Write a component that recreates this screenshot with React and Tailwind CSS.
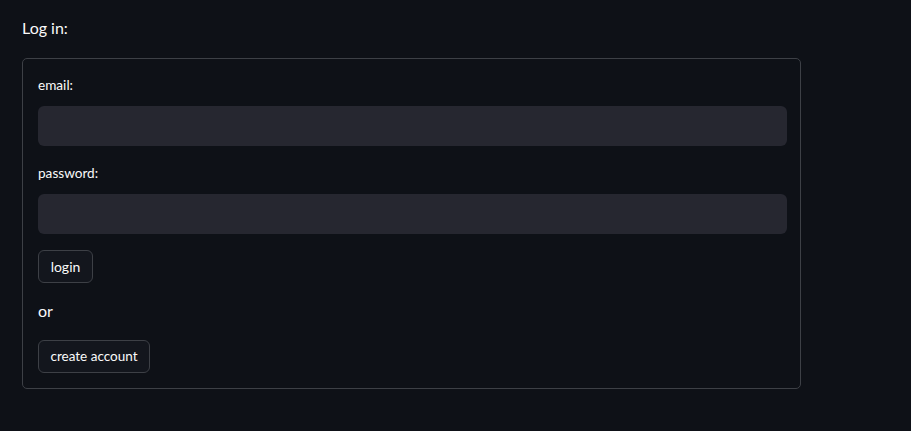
export default function App() {
  return (
    <div className="min-h-[431px] bg-[#0e1117] px-[22px] pt-4 text-[#fafafa] font-['Lato',sans-serif]">
      <p className="text-[16px] leading-[24px]">Log in:</p>
      <form className="mt-[18px] w-[779px] rounded-[5px] border border-[#3d4046] pl-[15px] pr-[13px] pt-[15px] pb-[15px]">
        <div>
          <label className="block h-[22px] text-[13.6px] leading-[22px]">email:</label>
          <input
            type="email"
            className="mt-[10px] block h-10 w-full rounded-[6px] bg-[#262730] px-3 outline-none"
          />
        </div>
        <div className="mt-[16px]">
          <label className="block h-[22px] text-[13.6px] leading-[22px]">password:</label>
          <input
            type="password"
            className="mt-[10px] block h-10 w-full rounded-[6px] bg-[#262730] px-3 outline-none"
          />
        </div>
        <button
          type="button"
          className="mt-[16px] block h-[33px] w-[55px] rounded-[6px] border border-[#3d4046] bg-[#13161d] text-[14px]"
        >
          login
        </button>
        <p className="mt-[16px] text-[16px] leading-[24px]">or</p>
        <button
          type="button"
          className="mt-[17px] block h-[33px] w-[112px] rounded-[6px] border border-[#3d4046] bg-[#13161d] text-[13.5px]"
        >
          create account
        </button>
      </form>
    </div>
  );
}
